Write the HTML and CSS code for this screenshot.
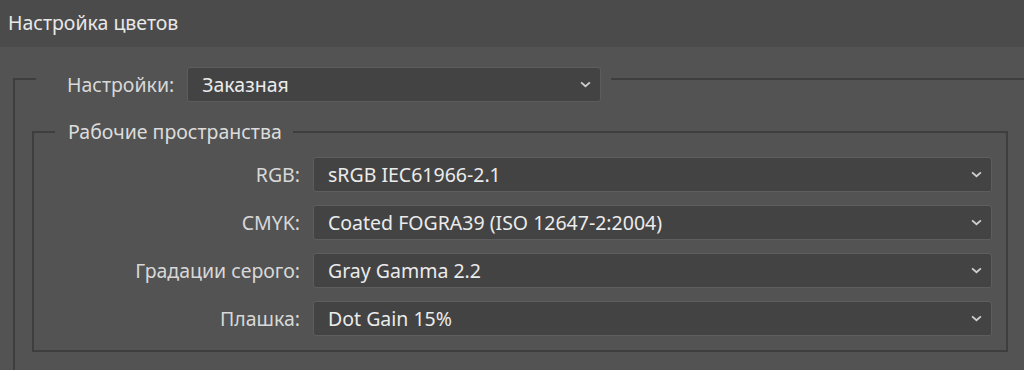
FILE: index.html
```html
<!DOCTYPE html>
<html lang="ru">
<head>
<meta charset="utf-8">
<title>Настройка цветов</title>
<link rel="stylesheet" href="styles.css">
</head>
<body>
<header class="title-bar">Настройка цветов</header>
<main class="content">
  <fieldset class="outer-group">
    <legend class="outer-legend">
      <span class="label">Настройки:</span>
      <div class="select select-wide"><span>Заказная</span><svg class="chev" viewBox="0 0 10 6"><path d="M1 1 L5 4.6 L9 1"/></svg></div>
    </legend>
    <fieldset class="inner-group">
      <legend class="inner-legend">Рабочие пространства</legend>
      <div class="rows">
        <span class="label">RGB:</span>
        <div class="select"><span>sRGB IEC61966-2.1</span><svg class="chev" viewBox="0 0 10 6"><path d="M1 1 L5 4.6 L9 1"/></svg></div>
        <span class="label">CMYK:</span>
        <div class="select"><span>Coated FOGRA39 (ISO 12647-2:2004)</span><svg class="chev" viewBox="0 0 10 6"><path d="M1 1 L5 4.6 L9 1"/></svg></div>
        <span class="label">Градации серого:</span>
        <div class="select"><span>Gray Gamma 2.2</span><svg class="chev" viewBox="0 0 10 6"><path d="M1 1 L5 4.6 L9 1"/></svg></div>
        <span class="label">Плашка:</span>
        <div class="select"><span>Dot Gain 15%</span><svg class="chev" viewBox="0 0 10 6"><path d="M1 1 L5 4.6 L9 1"/></svg></div>
      </div>
    </fieldset>
  </fieldset>
</main>
</body>
</html>
```

FILE: styles.css
```css
html, body {
  margin: 0;
  padding: 0;
}
body {
  background: #535353;
  font-family: "Noto Sans", "Open Sans", sans-serif;
  font-size: 19.5px;
  color: #e4e4e4;
  overflow: hidden;
  width: 1024px;
  height: 370px;
}
.title-bar {
  height: 47px;
  background: #4b4b4b;
  padding-left: 8px;
  line-height: 46px;
  color: #e8e8e8;
  box-sizing: border-box;
}
.content {
  overflow: hidden;
}
.outer-group {
  margin: 9px -40px 0 13px;
  padding: 18px 54px 30px 17px;
  border: 2px solid #3e3e3e;
  border-bottom: none;
  min-width: 0;
}
.outer-legend {
  padding: 11px 10px 0 31px;
  margin-left: 4px;
  display: flex;
  align-items: center;
  gap: 13px;
}
.label {
  color: #d8d8d8;
  white-space: nowrap;
}
.select {
  height: 35px;
  box-sizing: border-box;
  background: #434343;
  border: 1px solid #5d5d5d;
  border-radius: 3px;
  display: flex;
  align-items: center;
  justify-content: space-between;
  padding: 0 9px 0 14px;
  color: #ebebeb;
}
.select-wide {
  width: 414px;
}
.chev {
  width: 11px;
  height: 7px;
  fill: none;
  stroke: #cfcfcf;
  stroke-width: 1.6;
}
.inner-group {
  margin: 0;
  padding: 13px 14px 14px 0;
  border: 2px solid #3e3e3e;
  min-width: 0;
}
.inner-legend {
  margin-left: 21px;
  padding: 0 11px 0 13px;
  line-height: 24px;
  color: #dcdcdc;
}
.rows {
  display: grid;
  grid-template-columns: 266px 1fr;
  column-gap: 13px;
  row-gap: 13px;
  align-items: center;
}
.rows .label {
  text-align: right;
}
```
